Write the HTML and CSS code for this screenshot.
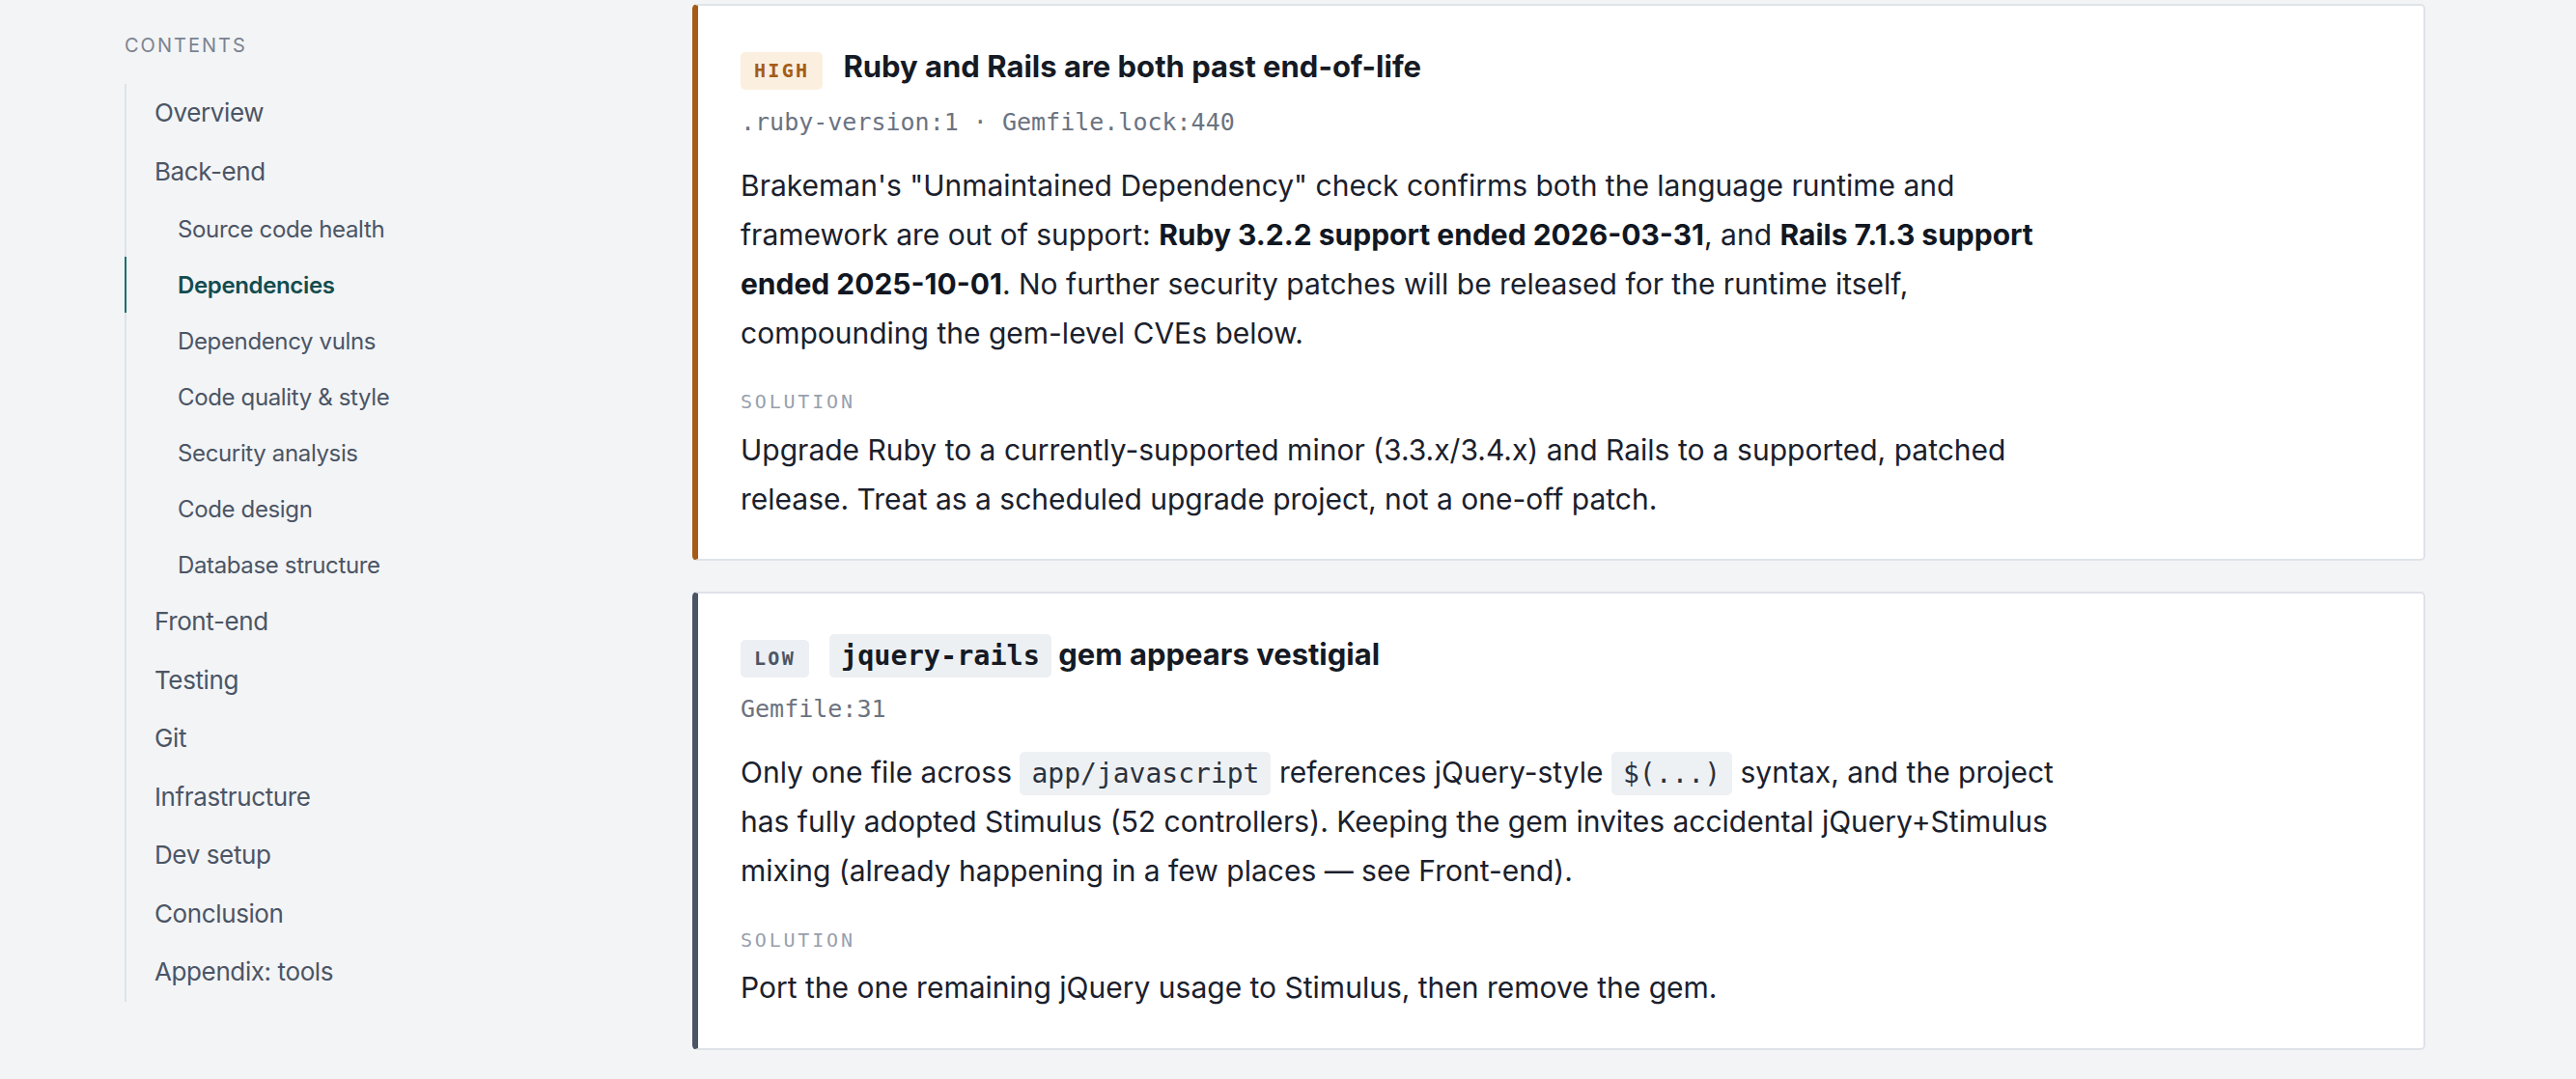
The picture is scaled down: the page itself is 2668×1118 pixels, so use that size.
FILE: index.html
```html
<!DOCTYPE html>
<html lang="en">
<head>
<meta charset="utf-8">
<title>Report – Dependencies</title>
<link rel="stylesheet" href="styles.css">
</head>
<body>
<div class="page">
  <aside class="toc">
    <div class="toc-label">CONTENTS</div>
    <ul class="toc-list">
      <li class="toc-item">Overview</li>
      <li class="toc-item">Back-end</li>
      <li class="toc-item toc-sub">Source code health</li>
      <li class="toc-item toc-sub toc-active">Dependencies</li>
      <li class="toc-item toc-sub">Dependency vulns</li>
      <li class="toc-item toc-sub">Code quality &amp; style</li>
      <li class="toc-item toc-sub">Security analysis</li>
      <li class="toc-item toc-sub">Code design</li>
      <li class="toc-item toc-sub">Database structure</li>
      <li class="toc-item">Front-end</li>
      <li class="toc-item">Testing</li>
      <li class="toc-item">Git</li>
      <li class="toc-item">Infrastructure</li>
      <li class="toc-item">Dev setup</li>
      <li class="toc-item">Conclusion</li>
      <li class="toc-item">Appendix: tools</li>
    </ul>
  </aside>
  <main class="main">
    <article class="card card-high">
      <div class="card-head">
        <span class="badge badge-high">HIGH</span>
        <h3 class="card-title">Ruby and Rails are both past end-of-life</h3>
      </div>
      <div class="loc">.ruby-version:1 · Gemfile.lock:440</div>
      <p class="desc">Brakeman's "Unmaintained Dependency" check confirms both the language runtime and framework are out of support: <strong>Ruby 3.2.2 support ended 2026-03-31</strong>, and <strong>Rails 7.1.3 support ended 2025-10-01</strong>. No further security patches will be released for the runtime itself, compounding the gem-level CVEs below.</p>
      <div class="sol-label">SOLUTION</div>
      <p class="sol">Upgrade Ruby to a currently-supported minor (3.3.x/3.4.x) and Rails to a supported, patched release. Treat as a scheduled upgrade project, not a one-off patch.</p>
    </article>
    <article class="card card-low">
      <div class="card-head">
        <span class="badge badge-low">LOW</span>
        <h3 class="card-title"><code class="title-code">jquery-rails</code> gem appears vestigial</h3>
      </div>
      <div class="loc">Gemfile:31</div>
      <p class="desc">Only one file across <code class="code">app/javascript</code> references jQuery-style <code class="code">$(...)</code> syntax, and the project has fully adopted Stimulus (52 controllers). Keeping the gem invites accidental jQuery+Stimulus mixing (already happening in a few places — see Front-end).</p>
      <div class="sol-label">SOLUTION</div>
      <p class="sol">Port the one remaining jQuery usage to Stimulus, then remove the gem.</p>
    </article>
  </main>
</div>
</body>
</html>
```
FILE: styles.css
```css
* {
  box-sizing: border-box;
}

html,
body {
  margin: 0;
  padding: 0;
}

body {
  background: #f3f4f6;
  font-family: Inter, "Noto Sans", sans-serif;
  color: #1a202c;
}

.page {
  display: grid;
  grid-template-columns: 717px 1795px;
}

/* ---------- table of contents ---------- */
.toc {
  padding: 35px 0 0 129px;
}

.toc-label {
  font-size: 20px;
  line-height: 24px;
  letter-spacing: 0.1em;
  color: #7b8390;
  margin: 0 0 28px;
}

.toc-list {
  list-style: none;
  margin: 0;
  padding: 0;
  border-left: 2px solid #dfe3e8;
}

.toc-item {
  font-size: 26px;
  line-height: 42px;
  letter-spacing: -0.015em;
  padding: 9.25px 0 9.25px 29px;
  color: #4b5565;
}

.toc-sub {
  font-size: 24px;
  line-height: 39px;
  padding-top: 9.5px;
  padding-bottom: 9.5px;
  padding-left: 53px;
}

.toc-active {
  margin-left: -2px;
  border-left: 2px solid #17706f;
  color: #124c4f;
  font-weight: 600;
}

/* ---------- findings ---------- */
.main {
  padding-top: 4px;
  display: flex;
  flex-direction: column;
  gap: 32px;
}

.card {
  background: #fff;
  border: 2px solid #dfe3e8;
  border-left-width: 6px;
  border-radius: 5px;
  padding: 41.8px 40px 36.4px 44px;
}

.card-high {
  border-left-color: #a65b14;
}

.card-low {
  border-left-color: #4a5565;
}

.card-head {
  display: flex;
  align-items: baseline;
  gap: 21px;
}

.badge {
  font-family: "DejaVu Sans Mono", monospace;
  font-weight: 700;
  font-size: 20px;
  line-height: 27px;
  padding: 6px 14px;
  border-radius: 5px;
  letter-spacing: 0.115em;
}

.badge-high {
  background: #fbefdf;
  color: #a35c17;
}

.badge-low {
  background: #eceff3;
  color: #4b5565;
}

.card-title {
  margin: 0;
  font-size: 31px;
  line-height: 1.35;
  font-weight: 700;
  color: #151a24;
}

.title-code {
  font-family: "DejaVu Sans Mono", monospace;
  font-weight: 700;
  font-size: 28.5px;
  line-height: 1;
  background: #edf0f3;
  border-radius: 5px;
  padding: 6px 12px;
}

.loc {
  font-family: "DejaVu Sans Mono", monospace;
  font-size: 25px;
  line-height: 36px;
  color: #6b7381;
  margin-top: 15.75px;
}

.desc,
.sol {
  font-size: 30px;
  line-height: 51px;
  max-width: 1385px;
  color: #1a202c;
}

.desc {
  margin: 22px 0 0;
}

.desc strong {
  font-weight: 700;
  color: #111722;
}

.code {
  font-family: "DejaVu Sans Mono", monospace;
  font-size: 28px;
  line-height: 1;
  background: #eef1f4;
  border-radius: 5px;
  padding: 6px 12px;
  color: #2b313c;
}

.sol-label {
  font-family: "DejaVu Sans Mono", monospace;
  font-size: 20px;
  line-height: 30px;
  letter-spacing: 0.14em;
  color: #98a0ac;
  margin-top: 30.5px;
}

.sol {
  margin: 9.5px 0 0;
}
```
